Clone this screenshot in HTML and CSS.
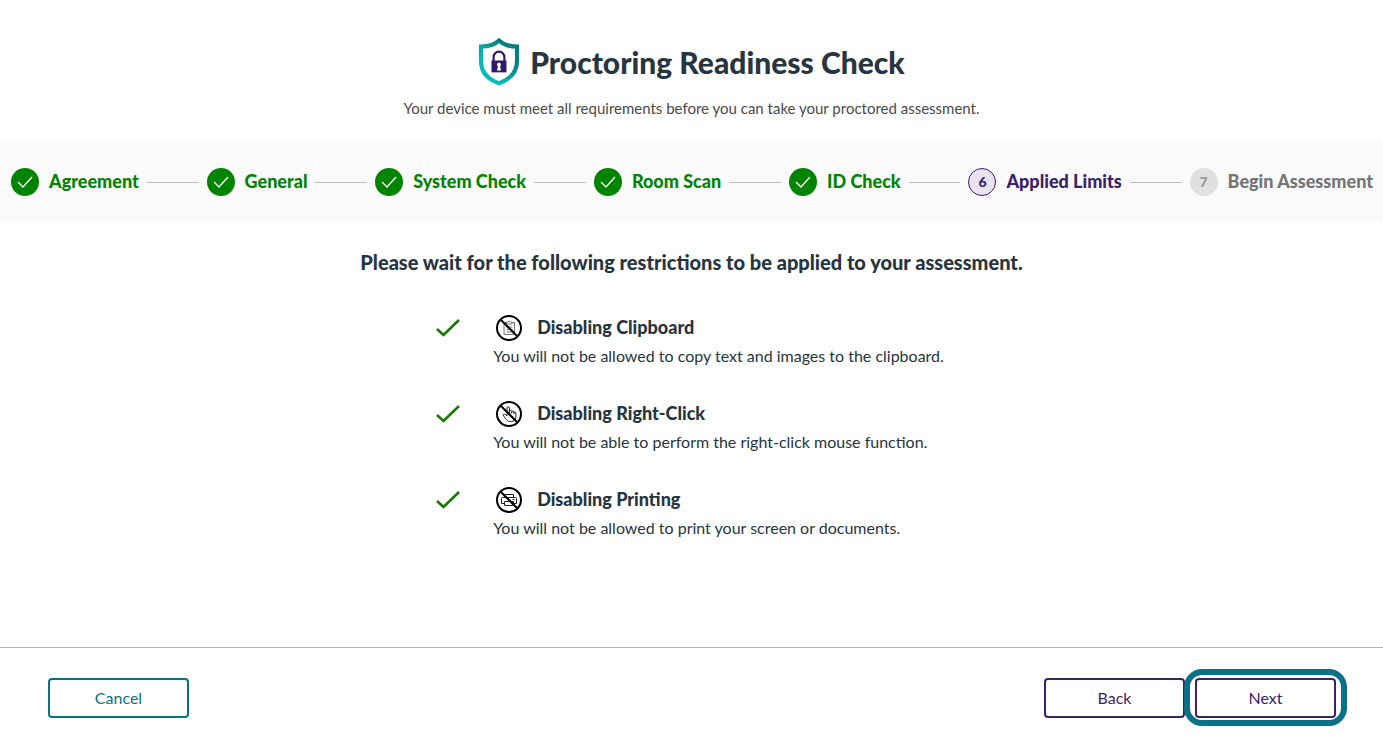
FILE: index.html
```html
<!DOCTYPE html>
<html lang="en">
<head>
    <meta charset="UTF-8">
    <meta name="viewport" content="width=device-width, initial-scale=1.0">
    <title>Proctoring Readiness Check</title>
    <link rel="stylesheet" href="styles.css">
</head>
<body>
    <!-- Page title -->
    <header class="header">
        <div class="title-row">
            <svg class="logo" viewBox="0 0 42 48" aria-hidden="true">
                <defs>
                    <linearGradient id="shieldFill" x1="0" y1="1" x2="1" y2="0">
                        <stop offset="0.25" stop-color="#06bdb9" />
                        <stop offset="0.75" stop-color="#067f7e" />
                    </linearGradient>
                </defs>
                <path d="M21 2.6 C17 6.6 11 8.6 3 8.6 V23 C3 34 9 41 21 45.2 C33 41 39 34 39 23 V8.6 C31 8.6 25 6.6 21 2.6 Z" fill="#fff" stroke="url(#shieldFill)" stroke-width="4.2" />
                <path d="M15.6 23 V19 a5.4 5.4 0 0 1 10.8 0 V23" fill="none" stroke="#33196b" stroke-width="2.2" />
                <rect x="13.5" y="22.5" width="15" height="11.5" fill="#33196b" />
                <rect x="13.5" y="34" width="15" height="1" fill="#b9aacb" />
                <path d="M21 24.6 a2.1 2.1 0 0 1 1.1 3.8 L23 32.5 H19 L19.9 28.4 A2.1 2.1 0 0 1 21 24.6 Z" fill="#fff" />
            </svg>
            <h1>Proctoring Readiness Check</h1>
        </div>
        <p>Your device must meet all requirements before you can take your proctored assessment.</p>
    </header>

    <!-- Progress steps -->
    <ol class="steps">
        <li class="step done">
            <span class="step-icon"><svg viewBox="0 0 28 28"><path d="M7 14 L12 19 L21 9" /></svg></span>
            <span class="step-label">Agreement</span>
        </li>
        <li class="step done">
            <span class="step-icon"><svg viewBox="0 0 28 28"><path d="M7 14 L12 19 L21 9" /></svg></span>
            <span class="step-label">General</span>
        </li>
        <li class="step done">
            <span class="step-icon"><svg viewBox="0 0 28 28"><path d="M7 14 L12 19 L21 9" /></svg></span>
            <span class="step-label">System Check</span>
        </li>
        <li class="step done">
            <span class="step-icon"><svg viewBox="0 0 28 28"><path d="M7 14 L12 19 L21 9" /></svg></span>
            <span class="step-label">Room Scan</span>
        </li>
        <li class="step done">
            <span class="step-icon"><svg viewBox="0 0 28 28"><path d="M7 14 L12 19 L21 9" /></svg></span>
            <span class="step-label">ID Check</span>
        </li>
        <li class="step current" aria-current="step">
            <span class="step-icon">6</span>
            <span class="step-label">Applied Limits</span>
        </li>
        <li class="step">
            <span class="step-icon">7</span>
            <span class="step-label">Begin Assessment</span>
        </li>
    </ol>

    <!-- Restrictions -->
    <main class="content">
        <h2>Please wait for the following restrictions to be applied to your assessment.</h2>

        <ul class="limits">
            <li class="limit">
                <svg class="tick" viewBox="0 0 26 20"><path d="M2 11 L8.5 17 L24 2" /></svg>
                <div>
                    <div class="limit-title">
                        <svg class="limit-icon" viewBox="0 0 28 28">
                            <g class="thin">
                                <path d="M11.5 8.5 H9 V20.5 H19.5 V8.5 H17" />
                                <path d="M11.5 8 H13 L14.2 7 L15.5 8 H17 V10 H11.5 Z" />
                                <path d="M11.5 13 H17.5 M11.5 15.5 H17.5 M11.5 18 H17.5" />
                            </g>
                            <circle cx="14" cy="14" r="12" />
                            <path d="M5.5 5.5 L22.5 22.5" />
                        </svg>
                        <h3>Disabling Clipboard</h3>
                    </div>
                    <p>You will not be allowed to copy text and images to the clipboard.</p>
                </div>
            </li>
            <li class="limit">
                <svg class="tick" viewBox="0 0 26 20"><path d="M2 11 L8.5 17 L24 2" /></svg>
                <div>
                    <div class="limit-title">
                        <svg class="limit-icon" viewBox="0 0 28 28">
                            <g class="thin dark">
                                <path d="M12 16 V8 a1.2 1.2 0 0 1 2.4 0 V13 M14.4 11.6 a1.1 1.1 0 0 1 2.3 0 V13.5 M16.7 12.2 a1.1 1.1 0 0 1 2.2 0 V14 M18.9 13 a1 1 0 0 1 2 0 V17 C20.9 19.5 19 21.5 16.5 21.5 H15 C12.5 21.5 11.5 20 8 15 C8.5 13.6 10.5 14 12 16" />
                            </g>
                            <circle cx="14" cy="14" r="12" />
                            <path d="M5.5 5.5 L22.5 22.5" />
                        </svg>
                        <h3>Disabling Right-Click</h3>
                    </div>
                    <p>You will not be able to perform the right-click mouse function.</p>
                </div>
            </li>
            <li class="limit">
                <svg class="tick" viewBox="0 0 26 20"><path d="M2 11 L8.5 17 L24 2" /></svg>
                <div>
                    <div class="limit-title">
                        <svg class="limit-icon" viewBox="0 0 28 28">
                            <g class="thin dark">
                                <path d="M9.5 11.5 V8.5 H18.5 V11.5" />
                                <path d="M9.5 17.5 H6.5 V12.5 Q6.5 11.5 7.5 11.5 H20.5 Q21.5 11.5 21.5 12.5 V17.5 H18.5" />
                                <path d="M9.5 15.5 H18.5 V19.5 H9.5 Z M17.5 13.5 H19.5" />
                            </g>
                            <circle cx="14" cy="14" r="12" />
                            <path d="M5.5 5.5 L22.5 22.5" />
                        </svg>
                        <h3>Disabling Printing</h3>
                    </div>
                    <p>You will not be allowed to print your screen or documents.</p>
                </div>
            </li>
        </ul>
    </main>

    <!-- Footer buttons -->
    <footer class="footer">
        <button type="button" class="btn btn-cancel">Cancel</button>
        <div class="footer-right">
            <button type="button" class="btn">Back</button>
            <button type="button" class="btn btn-focus">Next</button>
        </div>
    </footer>
</body>
</html>
```

FILE: styles.css
```css
* {
    box-sizing: border-box;
}

body {
    font-family: Lato, 'Liberation Sans', sans-serif;
    font-size: 16px;
    line-height: 24px;
    color: #273540;
    background-color: #fff;
    margin: 0;
    min-height: 100vh;
    display: flex;
    flex-direction: column;
}

h1, h2, h3, p, ol, ul {
    margin: 0;
    padding: 0;
}

h1, h2, h3 {
    font-weight: 900;
}

ol, ul {
    list-style: none;
}

/* Header */
.header {
    padding: 36px 20px 22px;
    text-align: center;
}

.title-row {
    display: flex;
    justify-content: center;
    align-items: center;
    gap: 10px;
    margin-bottom: 8px;
}

.logo {
    width: 42px;
    height: 52px;
}

h1 {
    font-size: 30px;
    line-height: 40px;
}

.header p {
    font-size: 15px;
    color: #4a4a4a;
}

/* Steps */
.steps {
    display: flex;
    align-items: center;
    padding: 0 10px 0 11px;
    min-height: 80px;
    background-color: #fafafa;
}

.step {
    display: flex;
    align-items: center;
    flex: 1 1 auto;
    color: #757575;
    white-space: nowrap;
}

.step:last-child {
    flex: none;
}

/* connecting line */
.step:not(:last-child)::after {
    content: "";
    flex: 1;
    height: 1px;
    margin: 0 8px;
    background-color: #bdbdbd;
}

.step-icon {
    width: 28px;
    height: 28px;
    margin-right: 10px;
    border-radius: 50%;
    background-color: #e0e0e0;
    color: #999;
    font-size: 14px;
    font-weight: 900;
    line-height: 28px;
    text-align: center;
}

.step-icon svg {
    display: block;
    fill: none;
    stroke: #fff;
    stroke-width: 1.3;
}

.step-label {
    padding-bottom: 2px;
    font-size: 18px;
    font-weight: 900;
}

.step.done {
    color: #008400;
}

.done .step-icon {
    background-color: #008400;
}

.step.current {
    color: #3c2268;
}

.current .step-icon {
    border: 1px solid #3c2268;
    background-color: #e8e2f1;
    color: #3c2268;
    line-height: 26px;
}

/* Content */
.content {
    flex: 1;
    padding: 28px 20px;
}

h2 {
    font-size: 20px;
    text-align: center;
}

.limits {
    width: fit-content;
    margin: 40px auto 0;
    padding-right: 4px;
    display: flex;
    flex-direction: column;
    gap: 32px;
}

.limit {
    display: flex;
    gap: 32px;
}

.tick {
    width: 26px;
    height: 20px;
    margin-top: 4px;
    fill: none;
    stroke: #147a00;
    stroke-width: 2.6;
}

.limit-title {
    display: flex;
    align-items: center;
    gap: 14px;
    margin-bottom: 2px;
    padding-left: 2px;
}

.limit-icon {
    width: 28px;
    height: 28px;
    fill: none;
    stroke: #000;
    stroke-width: 2;
}

.limit-icon .thin {
    stroke: #777;
    stroke-width: 1;
}

.limit-icon .dark {
    stroke: #222;
}

h3 {
    padding-bottom: 2px;
    font-size: 18px;
}

/* Footer */
.footer {
    display: flex;
    justify-content: space-between;
    padding: 30px 47px 26px 48px;
    border-top: 1px solid #b3b3b3;
}

.footer-right {
    display: flex;
    gap: 10px;
}

.btn {
    width: 141px;
    height: 40px;
    padding: 0 0 2px;
    background-color: #fff;
    border: 2px solid #3c2268;
    border-radius: 4px;
    color: #3c2268;
    font-family: inherit;
    font-size: 16px;
    cursor: pointer;
}

.btn-cancel {
    border-color: #0b7186;
    color: #0b7186;
}

/* focus ring */
.btn-focus {
    position: relative;
    outline: none;
}

.btn-focus::after {
    content: "";
    position: absolute;
    inset: -11px -13px -10px;
    border: 6px solid #0b7186;
    border-radius: 18px;
}
```
